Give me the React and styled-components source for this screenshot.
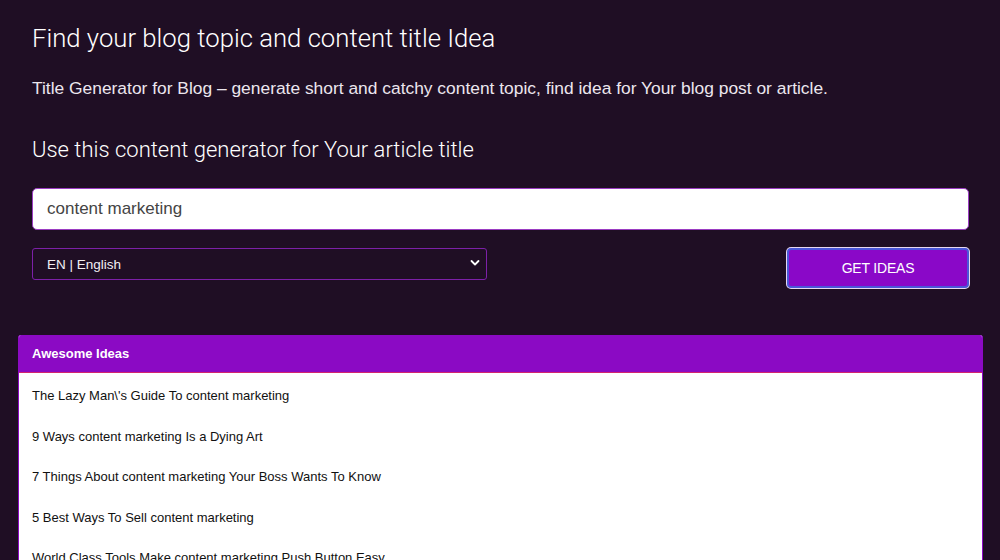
import React from "react";
import styled, { createGlobalStyle } from "styled-components";

const Global = createGlobalStyle`
  html, body { margin: 0; padding: 0; background: #1f0e24; }
  body { font-family: "Liberation Sans", Arial, sans-serif; overflow: hidden; }
`;

const Page = styled.div`
  width: 1000px;
  height: 560px;
  background: #1f0e24;
  overflow: hidden;
`;

const Form = styled.div`
  padding: 22px 31px 0 32px;
  display: flex;
  flex-direction: column;
`;

const Title = styled.h1`
  margin: 0;
  font-family: Roboto, "Liberation Sans", sans-serif;
  font-weight: 300;
  font-size: 25.7px;
  line-height: 32px;
  color: #ffffff;
`;

const Lead = styled.p`
  margin: 23px 0 0;
  font-size: 17.4px;
  line-height: 22px;
  color: #ece6ee;
`;

const SubTitle = styled.h2`
  margin: 37px 0 0;
  font-family: Roboto, "Liberation Sans", sans-serif;
  font-weight: 300;
  font-size: 22px;
  line-height: 28px;
  color: #ffffff;
`;

const Input = styled.input`
  margin-top: 24px;
  height: 42px;
  box-sizing: border-box;
  border: 1px solid #9b3dc2;
  border-radius: 5px;
  background: #ffffff;
  padding: 0 14px;
  font-family: "Liberation Sans", Arial, sans-serif;
  font-size: 17px;
  color: #444;
  outline: none;
`;

const Controls = styled.div`
  margin-top: 18px;
  display: flex;
  justify-content: space-between;
  align-items: flex-start;
`;

const SelectWrap = styled.div`
  position: relative;
  width: 455px;
  height: 32px;
`;

const Select = styled.select`
  appearance: none;
  width: 100%;
  height: 100%;
  box-sizing: border-box;
  background: #1f0e24;
  border: 1px solid #7c20a8;
  border-radius: 3px;
  color: #f2eef4;
  font-family: "Liberation Sans", Arial, sans-serif;
  font-size: 13.5px;
  padding: 0 14px;
  outline: none;
`;

const Chevron = styled.svg`
  position: absolute;
  right: 7px;
  top: 11px;
  pointer-events: none;
`;

const Button = styled.button`
  width: 182px;
  height: 40px;
  box-sizing: border-box;
  background: #8a08c8;
  border: 2px solid #4b56d8;
  box-shadow: 0 0 0 1px #e6d9f2;
  border-radius: 4px;
  color: #ffffff;
  font-family: "Liberation Sans", Arial, sans-serif;
  font-size: 14px;
  letter-spacing: -0.2px;
`;

const Card = styled.section`
  margin: 47px 17px 0 18px;
  border: 1px solid #8b0ac4;
  border-top: none;
  border-radius: 3px 3px 0 0;
  background: #ffffff;
  overflow: hidden;
`;

const CardHeader = styled.div`
  height: 37px;
  background: #8b0ac4;
  border-bottom: 1px solid #d3246f;
  display: flex;
  align-items: center;
  padding-left: 13px;
  font-weight: bold;
  font-size: 13px;
  color: #ffffff;
`;

const List = styled.ul`
  list-style: none;
  margin: 0;
  padding: 14px 0 0;
`;

const Item = styled.li`
  padding: 0 13px;
  height: 40.5px;
  line-height: 18px;
  font-size: 13px;
  color: #111;
`;

const ideas = [
  "The Lazy Man\\'s Guide To content marketing",
  "9 Ways content marketing Is a Dying Art",
  "7 Things About content marketing Your Boss Wants To Know",
  "5 Best Ways To Sell content marketing",
  "World Class Tools Make content marketing Push Button Easy",
];

export default function App() {
  return (
    <Page>
      <Global />
      <Form>
        <Title>Find your blog topic and content title Idea</Title>
        <Lead>
          Title Generator for Blog – generate short and catchy content topic, find idea for Your blog post or article.
        </Lead>
        <SubTitle>Use this content generator for Your article title</SubTitle>
        <Input defaultValue="content marketing" />
        <Controls>
          <SelectWrap>
            <Select defaultValue="en">
              <option value="en">EN | English</option>
            </Select>
            <Chevron width="10" height="8" viewBox="0 0 10 8">
              <path d="M1.5 2 L5 5.5 L8.5 2" fill="none" stroke="#ffffff" strokeWidth="1.8" strokeLinecap="round" strokeLinejoin="round" />
            </Chevron>
          </SelectWrap>
          <Button>GET IDEAS</Button>
        </Controls>
      </Form>
      <Card>
        <CardHeader>Awesome Ideas</CardHeader>
        <List>
          {ideas.map((t) => (
            <Item key={t}>{t}</Item>
          ))}
        </List>
      </Card>
    </Page>
  );
}
